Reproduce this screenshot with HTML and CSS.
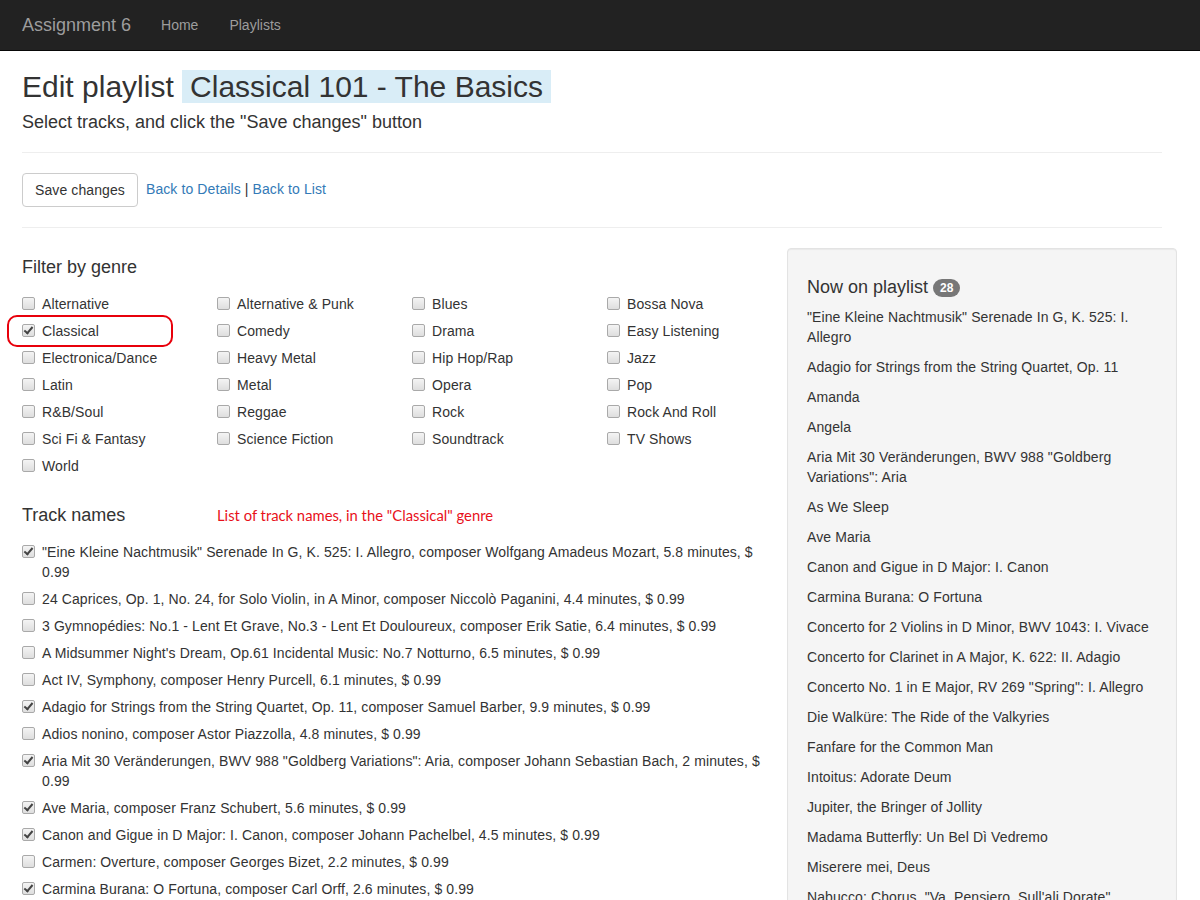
FILE: index.html
```html
<!DOCTYPE html>
<html lang="en">
<head>
<meta charset="utf-8">
<title>Edit playlist</title>
<link rel="stylesheet" href="styles.css">
</head>
<body>
<nav class="navbar">
  <a class="brand" href="#">Assignment 6</a>
  <a class="nav-link" href="#">Home</a>
  <a class="nav-link" href="#">Playlists</a>
</nav>

<div class="container">
  <h1 class="title">Edit playlist <span class="hl">Classical 101 - The Basics</span></h1>
  <h4 class="subtitle">Select tracks, and click the "Save changes" button</h4>
  <hr class="rule">
  <div class="actions">
    <button class="btn">Save changes</button>
    <span class="links"><a href="#">Back to Details</a> | <a href="#">Back to List</a></span>
  </div>
  <hr class="rule">

  <div class="row">
    <div class="main-col">
      <h4 class="section">Filter by genre</h4>
      <div class="genres">
        <label class="check"><span class="cb"></span>Alternative</label>
        <label class="check"><span class="cb"></span>Alternative &amp; Punk</label>
        <label class="check"><span class="cb"></span>Blues</label>
        <label class="check"><span class="cb"></span>Bossa Nova</label>
        <label class="check"><span class="cb on"></span>Classical</label>
        <label class="check"><span class="cb"></span>Comedy</label>
        <label class="check"><span class="cb"></span>Drama</label>
        <label class="check"><span class="cb"></span>Easy Listening</label>
        <label class="check"><span class="cb"></span>Electronica/Dance</label>
        <label class="check"><span class="cb"></span>Heavy Metal</label>
        <label class="check"><span class="cb"></span>Hip Hop/Rap</label>
        <label class="check"><span class="cb"></span>Jazz</label>
        <label class="check"><span class="cb"></span>Latin</label>
        <label class="check"><span class="cb"></span>Metal</label>
        <label class="check"><span class="cb"></span>Opera</label>
        <label class="check"><span class="cb"></span>Pop</label>
        <label class="check"><span class="cb"></span>R&amp;B/Soul</label>
        <label class="check"><span class="cb"></span>Reggae</label>
        <label class="check"><span class="cb"></span>Rock</label>
        <label class="check"><span class="cb"></span>Rock And Roll</label>
        <label class="check"><span class="cb"></span>Sci Fi &amp; Fantasy</label>
        <label class="check"><span class="cb"></span>Science Fiction</label>
        <label class="check"><span class="cb"></span>Soundtrack</label>
        <label class="check"><span class="cb"></span>TV Shows</label>
        <label class="check"><span class="cb"></span>World</label>
        <span class="annot-ring"></span>
      </div>

      <div class="tracks-head">
        <h4 class="section">Track names</h4>
        <span class="annot-text">List of track names, in the "Classical" genre</span>
      </div>
      <div class="tracks">
        <label class="check"><span class="cb on"></span><span>"Eine Kleine Nachtmusik" Serenade In G, K. 525: I. Allegro, composer Wolfgang Amadeus Mozart, 5.8 minutes, $ 0.99</span></label>
        <label class="check"><span class="cb"></span><span>24 Caprices, Op. 1, No. 24, for Solo Violin, in A Minor, composer Niccolò Paganini, 4.4 minutes, $ 0.99</span></label>
        <label class="check"><span class="cb"></span><span>3 Gymnopédies: No.1 - Lent Et Grave, No.3 - Lent Et Douloureux, composer Erik Satie, 6.4 minutes, $ 0.99</span></label>
        <label class="check"><span class="cb"></span><span>A Midsummer Night's Dream, Op.61 Incidental Music: No.7 Notturno, 6.5 minutes, $ 0.99</span></label>
        <label class="check"><span class="cb"></span><span>Act IV, Symphony, composer Henry Purcell, 6.1 minutes, $ 0.99</span></label>
        <label class="check"><span class="cb on"></span><span>Adagio for Strings from the String Quartet, Op. 11, composer Samuel Barber, 9.9 minutes, $ 0.99</span></label>
        <label class="check"><span class="cb"></span><span>Adios nonino, composer Astor Piazzolla, 4.8 minutes, $ 0.99</span></label>
        <label class="check"><span class="cb on"></span><span>Aria Mit 30 Veränderungen, BWV 988 "Goldberg Variations": Aria, composer Johann Sebastian Bach, 2 minutes, $ 0.99</span></label>
        <label class="check"><span class="cb on"></span><span>Ave Maria, composer Franz Schubert, 5.6 minutes, $ 0.99</span></label>
        <label class="check"><span class="cb on"></span><span>Canon and Gigue in D Major: I. Canon, composer Johann Pachelbel, 4.5 minutes, $ 0.99</span></label>
        <label class="check"><span class="cb"></span><span>Carmen: Overture, composer Georges Bizet, 2.2 minutes, $ 0.99</span></label>
        <label class="check"><span class="cb on"></span><span>Carmina Burana: O Fortuna, composer Carl Orff, 2.6 minutes, $ 0.99</span></label>
        <label class="check"><span class="cb"></span><span>Cavalleria Rusticana \ Act \ Intermezzo Sinfonico, composer Pietro Mascagni, 4.3 minutes, $ 0.99</span></label>
      </div>
    </div>

    <aside class="well">
      <h4 class="well-title">Now on playlist <span class="badge">28</span></h4>
      <p>"Eine Kleine Nachtmusik" Serenade In G, K. 525: I. Allegro</p>
      <p>Adagio for Strings from the String Quartet, Op. 11</p>
      <p>Amanda</p>
      <p>Angela</p>
      <p>Aria Mit 30 Veränderungen, BWV 988 "Goldberg Variations": Aria</p>
      <p>As We Sleep</p>
      <p>Ave Maria</p>
      <p>Canon and Gigue in D Major: I. Canon</p>
      <p>Carmina Burana: O Fortuna</p>
      <p>Concerto for 2 Violins in D Minor, BWV 1043: I. Vivace</p>
      <p>Concerto for Clarinet in A Major, K. 622: II. Adagio</p>
      <p>Concerto No. 1 in E Major, RV 269 "Spring": I. Allegro</p>
      <p>Die Walküre: The Ride of the Valkyries</p>
      <p>Fanfare for the Common Man</p>
      <p>Intoitus: Adorate Deum</p>
      <p>Jupiter, the Bringer of Jollity</p>
      <p>Madama Butterfly: Un Bel Dì Vedremo</p>
      <p>Miserere mei, Deus</p>
      <p>Nabucco: Chorus, "Va, Pensiero, Sull'ali Dorate"</p>
      <p>Requiem, Op.48: 4 Pie Jesu</p>
    </aside>
  </div>
</div>
</body>
</html>
```

FILE: styles.css
```css
html { overflow: hidden; }
body {
  margin: 0;
  font-family: "Liberation Sans", Arial, sans-serif;
  font-size: 14px;
  line-height: 20px;
  letter-spacing: 0.1px;
  color: #333;
  background: #fff;
}
a { color: #337ab7; text-decoration: none; }

.navbar {
  height: 50px;
  background: #222;
  border-bottom: 1px solid #080808;
  display: flex;
  align-items: center;
  padding-left: 22px;
}
.brand {
  color: #9d9d9d;
  font-size: 18px;
  line-height: 20px;
  letter-spacing: 0;
  margin-right: 30px;
}
.nav-link {
  color: #9d9d9d;
  font-size: 14px;
  letter-spacing: 0;
  margin-right: 31px;
}

.container {
  width: 1140px;
  padding: 0 22px;
}

.title {
  margin: 19px 0 0;
  font-size: 30px;
  font-weight: 400;
  line-height: 33px;
  letter-spacing: 0;
  color: #333;
}
.hl {
  display: inline-block;
  background: #d9edf7;
  padding: 0 8px;
  line-height: 33px;
}
.subtitle {
  margin: 9px 0 0;
  font-size: 18px;
  font-weight: 400;
  line-height: 20px;
  letter-spacing: 0;
}
.rule {
  border: 0;
  border-top: 1px solid #eee;
  margin: 20px 0;
  height: 0;
}
.actions {
  display: flex;
  align-items: center;
  gap: 8px;
}
.btn {
  font-family: inherit;
  font-size: 14px;
  line-height: 20px;
  letter-spacing: 0.1px;
  color: #333;
  background: #fff;
  border: 1px solid #ccc;
  border-radius: 4px;
  padding: 6px 12px;
  height: 34px;
}
.links { margin-top: -2px; }

.row {
  display: flex;
  align-items: flex-start;
}
.main-col {
  width: 750px;
  flex: none;
}
.section {
  margin: 9px 0 0;
  font-size: 18px;
  font-weight: 400;
  line-height: 20px;
  letter-spacing: 0;
}

.genres {
  position: relative;
  display: grid;
  grid-template-columns: repeat(4, 195px);
  row-gap: 7px;
  margin-top: 17px;
}
.check {
  display: flex;
  align-items: flex-start;
  line-height: 20px;
}
.cb {
  flex: none;
  position: relative;
  width: 11px;
  height: 11px;
  margin: 3px 7px 0 0;
  border: 1px solid #a9a9a9;
  border-radius: 2px;
  background: linear-gradient(#f4f4f4, #dedede);
}
.cb.on::after {
  content: "";
  position: absolute;
  left: 3px;
  top: 0px;
  width: 3px;
  height: 7px;
  border-right: 2px solid #444;
  border-bottom: 2px solid #444;
  transform: rotate(40deg);
}
.annot-ring {
  position: absolute;
  left: -15px;
  top: 21px;
  width: 162px;
  height: 28px;
  border: 2px solid #e8000b;
  border-radius: 10px;
}

.tracks-head {
  display: flex;
  align-items: baseline;
  margin-top: 20px;
}
.tracks-head .section { width: 195px; }
.annot-text {
  font-family: Lato, "Open Sans", sans-serif;
  font-size: 14.8px;
  letter-spacing: 0;
  color: #e8101a;
}
.tracks {
  display: flex;
  flex-direction: column;
  gap: 7px;
  margin-top: 17px;
}

.well {
  flex: none;
  box-sizing: border-box;
  width: 390px;
  margin-left: 15px;
  background: #f5f5f5;
  border: 1px solid #e3e3e3;
  border-radius: 4px;
  padding: 19px;
  box-shadow: inset 0 1px 1px rgba(0,0,0,.05);
}
.well-title {
  margin: 9px 0 10px;
  font-size: 18px;
  font-weight: 400;
  line-height: 20px;
  letter-spacing: 0;
}
.badge {
  display: inline-block;
  background: #777;
  color: #fff;
  font-size: 12px;
  font-weight: 700;
  line-height: 12px;
  letter-spacing: 0;
  padding: 3px 7px;
  border-radius: 10px;
  vertical-align: 1px;
}
.well p {
  margin: 0 0 10px;
}
```
